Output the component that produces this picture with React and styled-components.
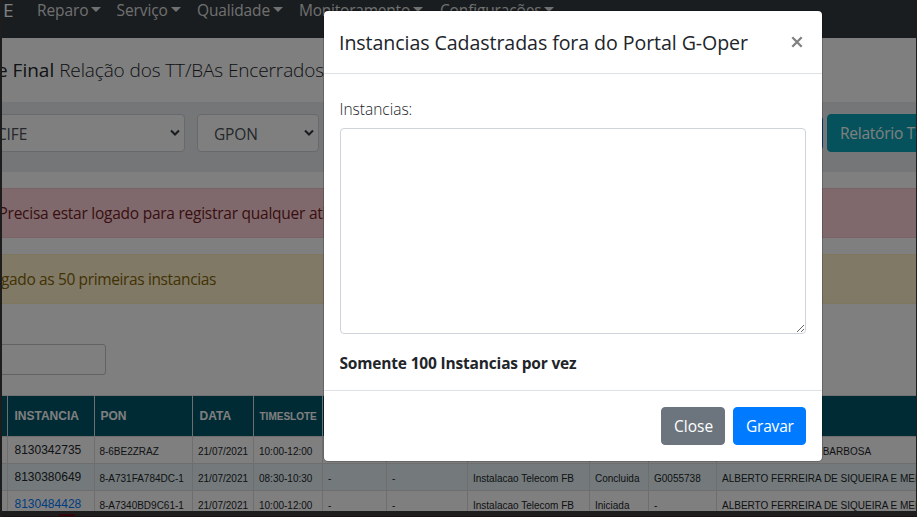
import React from 'react';
import styled, { createGlobalStyle } from 'styled-components';

const Global = createGlobalStyle`
  *, *::before, *::after { box-sizing: border-box; }
  body { margin: 0; overflow: hidden; background: #1d1d1e; }
`;

const Desktop = styled.div`
  width: 917px;
  height: 517px;
  padding: 0 1px 0 2px;
  overflow: hidden;
  background: #1d1d1e;
  font-family: "Open Sans", "Noto Sans", sans-serif;
  font-size: 15.5px;
  line-height: 24px;
  color: #212529;
`;

const Viewport = styled.div`
  position: relative;
  height: 511px;
  overflow: hidden;
  background: #fff;
`;

const Taskbar = styled.div`
  height: 6px;
  padding-left: 57px;
  display: flex;
  align-items: flex-end;
  border-bottom: 1px solid #1c1012;
`;

const TaskMark = styled.span`
  width: 16px;
  height: 2px;
  background: #35060c;
`;

const Navbar = styled.nav`
  height: 38px;
  padding-left: 1px;
  display: flex;
  background: #343a40;
  color: rgba(255, 255, 255, 0.85);
  overflow: hidden;
`;

const Brand = styled.span`
  width: 34px;
  flex: none;
  font-size: 19px;
  line-height: 21px;
  color: #fff;
`;

const NavLink = styled.a`
  width: ${p => p.$w}px;
  flex: none;
  display: flex;
  gap: 3px;
  line-height: 20px;
  letter-spacing: ${p => p.$ls}px;
  &::after {
    content: "";
    width: 10px;
    height: 5px;
    flex: none;
    margin-top: 7px;
    border: 5px solid transparent;
    border-top-color: currentColor;
    border-bottom: 0;
  }
`;

const Heading = styled.h5`
  height: 64px;
  margin: 0 0 0 -5px;
  padding: 20px 0 0;
  display: flex;
  font-size: 19px;
  line-height: 24px;
  font-weight: 400;
  white-space: pre;
`;

const Light = styled.span`
  font-weight: 300;
  letter-spacing: -0.12px;
`;

const Filters = styled.div`
  height: 70px;
  padding-top: 12px;
  display: flex;
  background: #e9ecef;
`;

const Select = styled.div`
  width: ${p => p.$w}px;
  height: 38px;
  flex: none;
  margin: 0 12px 0 ${p => p.$ml || 0}px;
  padding: 0 3px 0 ${p => p.$pl}px;
  display: flex;
  align-items: center;
  justify-content: space-between;
  border: 1px solid #ced4da;
  border-radius: 4px;
  background: #fff;
  color: #495057;
  line-height: 26px;
  letter-spacing: -0.15px;
`;

const SelectValue = styled.span`
  padding-top: 2px;
`;

const ActionButton = styled.button`
  width: ${p => p.$w}px;
  height: ${p => p.$h || 38}px;
  flex: none;
  margin: ${p => p.$m || 0};
  padding: 0 12px;
  border: 1px solid ${p => p.$bg};
  border-radius: 4px;
  background: ${p => p.$bg};
  color: #fff;
  font: 15.5px/24px "Open Sans", "Noto Sans", sans-serif;
  letter-spacing: ${p => p.$ls || 0}px;
  text-align: left;
  white-space: nowrap;
`;

const Alert = styled.div`
  height: 50px;
  margin: 16px -5px 0;
  padding-left: ${p => p.$pl}px;
  border: 1px solid ${p => p.$border};
  background: ${p => p.$bg};
  color: ${p => p.$fg};
  line-height: 49px;
  letter-spacing: ${p => p.$ls}px;
  white-space: nowrap;
`;

const SearchBox = styled.div`
  width: 110px;
  height: 31px;
  margin: 40px 0 20px -6px;
  border: 1px solid #c4c4c4;
  border-radius: 3px;
`;

const Table = styled.div`
  margin-left: -60px;
  width: 1100px;
  border-top: 1px solid #dee2e6;
  font-family: "Liberation Sans", Arial, sans-serif;
`;

const Row = styled.div`
  display: grid;
  grid-template-columns: 66px 87px 98px 61px 69px 64px 81px 122px 59px 68px 325px;
  height: ${p => (p.$head ? 41 : 27)}px;
  background: ${p => (p.$head ? '#00566b' : p.$odd ? '#e8f5f8' : '#fff')};
  color: ${p => (p.$head ? '#fff' : '#212529')};
`;

const Cell = styled.div`
  padding-left: ${p => p.$pl || 5}px;
  padding-top: ${p => p.$pt || 0}px;
  border-right: 1px solid #dcdcdc;
  border-bottom: 1px solid #dcdcdc;
  line-height: ${p => (p.$head ? 40 : 27)}px;
  font-size: ${p => (p.$big ? 12 : 10)}px;
  font-weight: ${p => (p.$head ? 700 : 400)};
  color: ${p => (p.$link ? '#007bff' : 'inherit')};
  white-space: nowrap;
  overflow: hidden;
`;

const Backdrop = styled.div`
  position: absolute;
  inset: 0;
  background: rgba(0, 0, 0, 0.5);
`;

const Modal = styled.section`
  position: absolute;
  left: 321px;
  top: 10px;
  width: 500px;
  height: 452px;
  border: 1px solid rgba(0, 0, 0, 0.2);
  border-radius: 5px;
  background: #fff;
  background-clip: padding-box;
`;

const ModalHeader = styled.header`
  height: 63px;
  padding: 0 18px 0 15px;
  display: flex;
  justify-content: space-between;
  align-items: center;
  border-bottom: 1px solid #dee2e6;
`;

const Title = styled.h5`
  margin: 0 0 -1px;
  font-size: 19.6px;
  font-weight: 500;
  letter-spacing: -0.08px;
  line-height: 30px;
  white-space: nowrap;
`;

const ModalBody = styled.div`
  height: 317px;
  padding: 24px 16px 0;
  border-bottom: 1px solid #dee2e6;
`;

const Label = styled.label`
  display: block;
  height: 30px;
  margin-left: -0.5px;
  line-height: 23px;
  font-weight: 300;
`;

const TextArea = styled.textarea`
  display: block;
  width: 466px;
  height: 206px;
  border: 1px solid #ced4da;
  border-radius: 4px;
  background: #fff;
  resize: both;
  outline: 0;
`;

const Note = styled.strong`
  display: block;
  margin: 17px 0 0 -0.5px;
  letter-spacing: -0.18px;
`;

const ModalFooter = styled.footer`
  padding: 16px 16px 0;
  display: flex;
  justify-content: flex-end;
  gap: 8px;
`;

const Chevron = () => (
  <svg width="12" height="8" viewBox="0 0 12 8">
    <path d="M2 1.5 6 5.5 10 1.5" fill="none" stroke="#343a40" strokeWidth="2.1" />
  </svg>
);

const CloseIcon = () => (
  <svg width="14" height="14" viewBox="0 0 14 14">
    <path d="M2.3 2.3 11.7 11.7M11.7 2.3 2.3 11.7" stroke="#808080" strokeWidth="2.3" fill="none" />
  </svg>
);

const nav = [
  ['Reparo', 79.5, -0.1],
  ['Serviço', 80.5, -0.1],
  ['Qualidade', 102, -0.15],
  ['Monitoramento', 141, -0.22],
  ['Configurações', 120, -0.15],
];

const headers = ['', 'INSTANCIA', 'PON', 'DATA', 'TIMESLOTE', '', '', '', '', '', ''];
const headerPads = [5, 6.5, 5.5, 6.5, 5.5];

const rows = [
  ['', '8130342735', '8-6BE2ZRAZ', '21/07/2021', '10:00-12:00', '-', '-', 'Instalacao Telecom FB', 'Concluida', '-', 'MARIA HELENA LIMA BARBOSA'],
  ['', '8130380649', '8-A731FA784DC-1', '21/07/2021', '08:30-10:30', '-', '-', 'Instalacao Telecom FB', 'Concluida', 'G0055738', 'ALBERTO FERREIRA DE SIQUEIRA E MELO'],
  ['', '8130484428', '8-A7340BD9C61-1', '21/07/2021', '10:00-12:00', '-', '-', 'Instalacao Telecom FB', 'Iniciada', '-', 'ALBERTO FERREIRA DE SIQUEIRA E MELO'],
];

export default function App() {
  return (
    <Desktop>
      <Global />
      <Viewport>
        <Navbar>
          <Brand>E</Brand>
          {nav.map(([label, w, ls]) => (
            <NavLink key={label} $w={w} $ls={ls}>{label}</NavLink>
          ))}
        </Navbar>
        <Heading>e Final <Light>Relação dos TT/BAs Encerrados</Light></Heading>
        <Filters>
          <Select $w={203} $ml={-20} $pl={14}><SelectValue>CIFE</SelectValue><Chevron /></Select>
          <Select $w={122} $pl={16}><SelectValue>GPON</SelectValue><Chevron /></Select>
          <ActionButton $w={100} $bg="#007bff" $h={34} $m="2px 4px 0 392px" />
          <ActionButton $w={160} $bg="#0aa4b8" $ls={-0.25}>Relatório Tecnico</ActionButton>
        </Filters>
        <Alert $bg="#ffd3d8" $border="#f5c6cb" $fg="#721c24" $pl={0.5} $ls={-0.25}>
          Precisa estar logado para registrar qualquer atividade
        </Alert>
        <Alert $bg="#fff3cd" $border="#ffeeba" $fg="#856404" $pl={3} $ls={-0.37}>
          gado as 50 primeiras instancias
        </Alert>
        <SearchBox />
        <Table>
          <Row $head>
            {headers.map((h, i) => (
              <Cell key={i} $head $big={h !== 'TIMESLOTE'} $pl={headerPads[i]} $pt={i === 4 ? 1 : 0}>{h}</Cell>
            ))}
          </Row>
          {rows.map((r, n) => (
            <Row key={n} $odd={n === 1}>
              {r.map((c, i) => (
                <Cell key={i} $big={i === 1} $link={i === 1 && n === 2} $pl={i === 1 ? 6.5 : i === 2 ? 4.4 : i === 10 && n === 0 ? 4 : 5} $pt={i === 1 ? 0 : n === 0 ? 1 : 0.5}>{c}</Cell>
              ))}
            </Row>
          ))}
        </Table>
        <Backdrop />
        <Modal>
          <ModalHeader>
            <Title>Instancias Cadastradas fora do Portal G-Oper</Title>
            <CloseIcon />
          </ModalHeader>
          <ModalBody>
            <Label>Instancias:</Label>
            <TextArea />
            <Note>Somente 100 Instancias por vez</Note>
          </ModalBody>
          <ModalFooter>
            <ActionButton $w={64} $bg="#6c757d">Close</ActionButton>
            <ActionButton $w={73} $bg="#007bff" $ls={-0.2}>Gravar</ActionButton>
          </ModalFooter>
        </Modal>
      </Viewport>
      <Taskbar><TaskMark /></Taskbar>
    </Desktop>
  );
}
